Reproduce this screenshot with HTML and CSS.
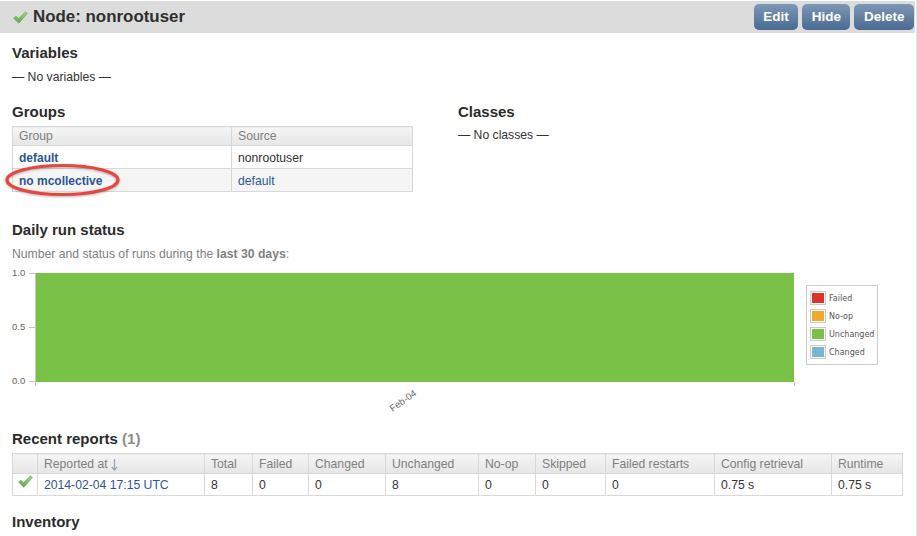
FILE: index.html
```html
<!DOCTYPE html>
<html lang="en">
<head>
  <meta charset="UTF-8" />
  <title>Node: nonrootuser</title>
  <link rel="stylesheet" href="styles.css">
</head>
<body>

<svg class="defs" width="0" height="0">
  <defs>
    <linearGradient id="checkFill" x1="0" y1="0" x2="0" y2="1">
      <stop offset="0" stop-color="#a5d98c"/>
      <stop offset="1" stop-color="#54a844"/>
    </linearGradient>
  </defs>
</svg>

<header class="node-bar">
  <h1>
    <svg class="check" width="15" height="13" viewBox="0 0 15 13"><path d="M0.6 7.2 L3 5.2 L5.6 7.6 L12.6 0.8 L14.4 2.4 L5.8 12.2 Z" fill="url(#checkFill)" stroke="#5c9f4c" stroke-width="0.6"/></svg>
    Node: nonrootuser
  </h1>
  <div class="actions">
    <a class="btn">Edit</a>
    <a class="btn">Hide</a>
    <a class="btn">Delete</a>
  </div>
</header>

<main>
  <section class="variables">
    <h2>Variables</h2>
    <p>— No variables —</p>
  </section>

  <section class="columns">
    <div class="col-groups">
      <h2>Groups</h2>
      <div class="group-wrap">
        <table class="groups">
          <thead>
            <tr><th class="g1">Group</th><th>Source</th></tr>
          </thead>
          <tbody>
            <tr><td><a class="strong">default</a></td><td>nonrootuser</td></tr>
            <tr class="alt"><td><a class="strong">no mcollective</a></td><td><a>default</a></td></tr>
          </tbody>
        </table>
        <svg class="circle" width="117" height="37" viewBox="0 0 117 37"><ellipse cx="58.5" cy="17" rx="55.5" ry="14.5" fill="none" stroke="#e8453c" stroke-width="3.2"/></svg>
      </div>
    </div>
    <div class="col-classes">
      <h2>Classes</h2>
      <p>— No classes —</p>
    </div>
  </section>

  <section class="daily">
    <h2>Daily run status</h2>
    <p class="muted">Number and status of runs during the <b>last 30 days</b>:</p>
    <div class="chart">
      <svg class="plot" width="794" height="155" viewBox="0 0 794 155">
        <rect x="23" y="6" width="759" height="109" fill="#7ac148"/>
        <path d="M23.5 6 V119 M782.5 115 V119 M17 6.5 H23 M17 60.5 H23 M17 114.5 H23" stroke="#c4c4c4" fill="none"/>
        <text x="0" y="9" class="tick">1.0</text>
        <text x="0" y="63" class="tick">0.5</text>
        <text x="0" y="117" class="tick">0.0</text>
        <text x="0" y="0" class="tick" transform="translate(380.5 145) rotate(-35)">Feb-04</text>
      </svg>
      <ul class="legend">
        <li><span class="swatch"><i class="failed"></i></span>Failed</li>
        <li><span class="swatch"><i class="noop"></i></span>No-op</li>
        <li><span class="swatch"><i class="unchanged"></i></span>Unchanged</li>
        <li><span class="swatch"><i class="changed"></i></span>Changed</li>
      </ul>
    </div>
  </section>

  <section class="reports">
    <h2>Recent reports <span class="count">(1)</span></h2>
    <table class="report-table">
      <thead>
        <tr>
          <th class="c-icon"></th>
          <th class="c-date">Reported at <svg class="arrow" width="7" height="12" viewBox="0 0 7 12"><path d="M3.5 0 V11 M0.8 8 L3.5 11 L6.2 8" fill="none" stroke="#8ea6c2" stroke-width="1.2"/></svg></th>
          <th class="c-total">Total</th>
          <th class="c-failed">Failed</th>
          <th class="c-changed">Changed</th>
          <th class="c-unchanged">Unchanged</th>
          <th class="c-noop">No-op</th>
          <th class="c-skipped">Skipped</th>
          <th class="c-restarts">Failed restarts</th>
          <th class="c-config">Config retrieval</th>
          <th>Runtime</th>
        </tr>
      </thead>
      <tbody>
        <tr>
          <td class="icon-cell"><svg width="15" height="13" viewBox="0 0 15 13"><path d="M0.6 7.2 L3 5.2 L5.6 7.6 L12.6 0.8 L14.4 2.4 L5.8 12.2 Z" fill="url(#checkFill)" stroke="#5c9f4c" stroke-width="0.6"/></svg></td>
          <td><a>2014-02-04 17:15 UTC</a></td>
          <td>8</td>
          <td>0</td>
          <td>0</td>
          <td>8</td>
          <td>0</td>
          <td>0</td>
          <td>0</td>
          <td>0.75 s</td>
          <td>0.75 s</td>
        </tr>
      </tbody>
    </table>
  </section>

  <section class="inventory">
    <h2>Inventory</h2>
  </section>
</main>

</body>
</html>
```

FILE: styles.css
```css
/* Basics */
* {
  box-sizing: border-box;
}
html, body {
  height: 536px;
  overflow: hidden;
}
body {
  margin: 0;
  padding-top: 1px;
  padding-right: 1px;
  background-color: #fff;
  border-right: 1px solid #e4e4e4;
  color: #333;
  font-family: "Liberation Sans", Arial, sans-serif;
  font-size: 12.2px;
}
a {
  color: #2c5596;
  text-decoration: none;
}
h2 {
  margin: 0;
  font-size: 15px;
  line-height: 20px;
  color: #2b2b2b;
}
p {
  margin: 0;
}
.defs {
  position: absolute;
}

/* Top bar */
.node-bar {
  display: flex;
  justify-content: space-between;
  align-items: center;
  height: 32px;
  padding: 0 1px 0 13px;
  background-color: #dcdcdc;
}
.node-bar h1 {
  display: flex;
  align-items: center;
  gap: 5px;
  margin: 0;
  font-size: 16.9px;
  color: #2f2f2f;
}
.actions {
  display: flex;
  gap: 4px;
}
.btn {
  display: block;
  height: 26px;
  padding: 0 9.5px;
  line-height: 25px;
  font-size: 13.5px;
  font-weight: bold;
  color: #fff;
  border-radius: 5px;
  background: linear-gradient(#7d97b6, #4a6a91);
}

/* Sections */
main {
  padding: 0 12px;
}
.variables {
  padding-top: 10px;
}
.variables p {
  margin-top: 6px;
  line-height: 16px;
}
.columns {
  display: flex;
  margin-top: 17px;
}
.col-groups {
  width: 446px;
}
.col-classes p {
  margin-top: 5px;
  line-height: 16px;
}
.group-wrap {
  position: relative;
  margin-top: 4px;
}
.circle {
  position: absolute;
  left: -8px;
  top: 37px;
  filter: drop-shadow(0 1px 1px rgba(0,0,0,0.3));
}

/* Tables */
table {
  border-collapse: collapse;
  table-layout: fixed;
  border: 1px solid #d8d8d8;
}
th, td {
  border: 1px solid #d8d8d8;
  padding: 0 6px;
  text-align: left;
  font-weight: normal;
  white-space: nowrap;
}
th {
  height: 19px;
  color: #808080;
  background: linear-gradient(#f5f5f5, #e5e5e5);
}
.groups {
  width: 401px;
}
.groups td {
  height: 23px;
  padding-top: 1px;
}
.g1 {
  width: 219px;
}
.alt td {
  background-color: #f5f5f5;
}
.strong {
  font-size: 12px;
  font-weight: bold;
}

/* Chart */
.daily {
  margin-top: 28px;
}
.muted {
  margin-top: 6px;
  line-height: 16px;
  color: #808080;
}
.chart {
  display: flex;
  align-items: flex-start;
  margin-top: 5px;
}
.tick {
  font-size: 9.5px;
  fill: #666;
  font-family: "Liberation Sans", Arial, sans-serif;
}
.legend {
  display: flex;
  flex-direction: column;
  gap: 4px;
  width: 72px;
  margin: 18px 0 0 0;
  padding: 5px 3px;
  list-style: none;
  border: 1px solid #ccc;
  font-family: "DejaVu Sans", sans-serif;
  font-size: 8px;
  color: #555;
}
.legend li {
  display: flex;
  align-items: center;
  gap: 3px;
  height: 14px;
}
.swatch {
  display: block;
  flex-shrink: 0;
  width: 16px;
  height: 14px;
  padding: 1px;
  border: 1px solid #ccc;
}
.swatch i {
  display: block;
  height: 100%;
}
.failed { background-color: #de322a; }
.noop { background-color: #f0a92a; }
.unchanged { background-color: #7ac148; }
.changed { background-color: #78b6d3; }

/* Reports */
.reports {
  margin-top: 7px;
}
.count {
  color: #8c8c8c;
}
.report-table {
  width: 891px;
  margin-top: 4px;
}
.report-table td {
  height: 22px;
}
.report-table th {
  height: 20px;
}
.c-icon { width: 25px; }
.c-date { width: 167px; }
.c-total { width: 48px; }
.c-failed { width: 56px; }
.c-changed { width: 77px; }
.c-unchanged { width: 93px; }
.c-noop { width: 57px; }
.c-skipped { width: 70px; }
.c-restarts { width: 109px; }
.c-config { width: 117px; }
.report-table .icon-cell {
  padding: 0 4px 7px 5px;
}
.icon-cell svg {
  display: block;
}
.arrow {
  vertical-align: -3px;
}
.inventory {
  margin-top: 16px;
}
```
